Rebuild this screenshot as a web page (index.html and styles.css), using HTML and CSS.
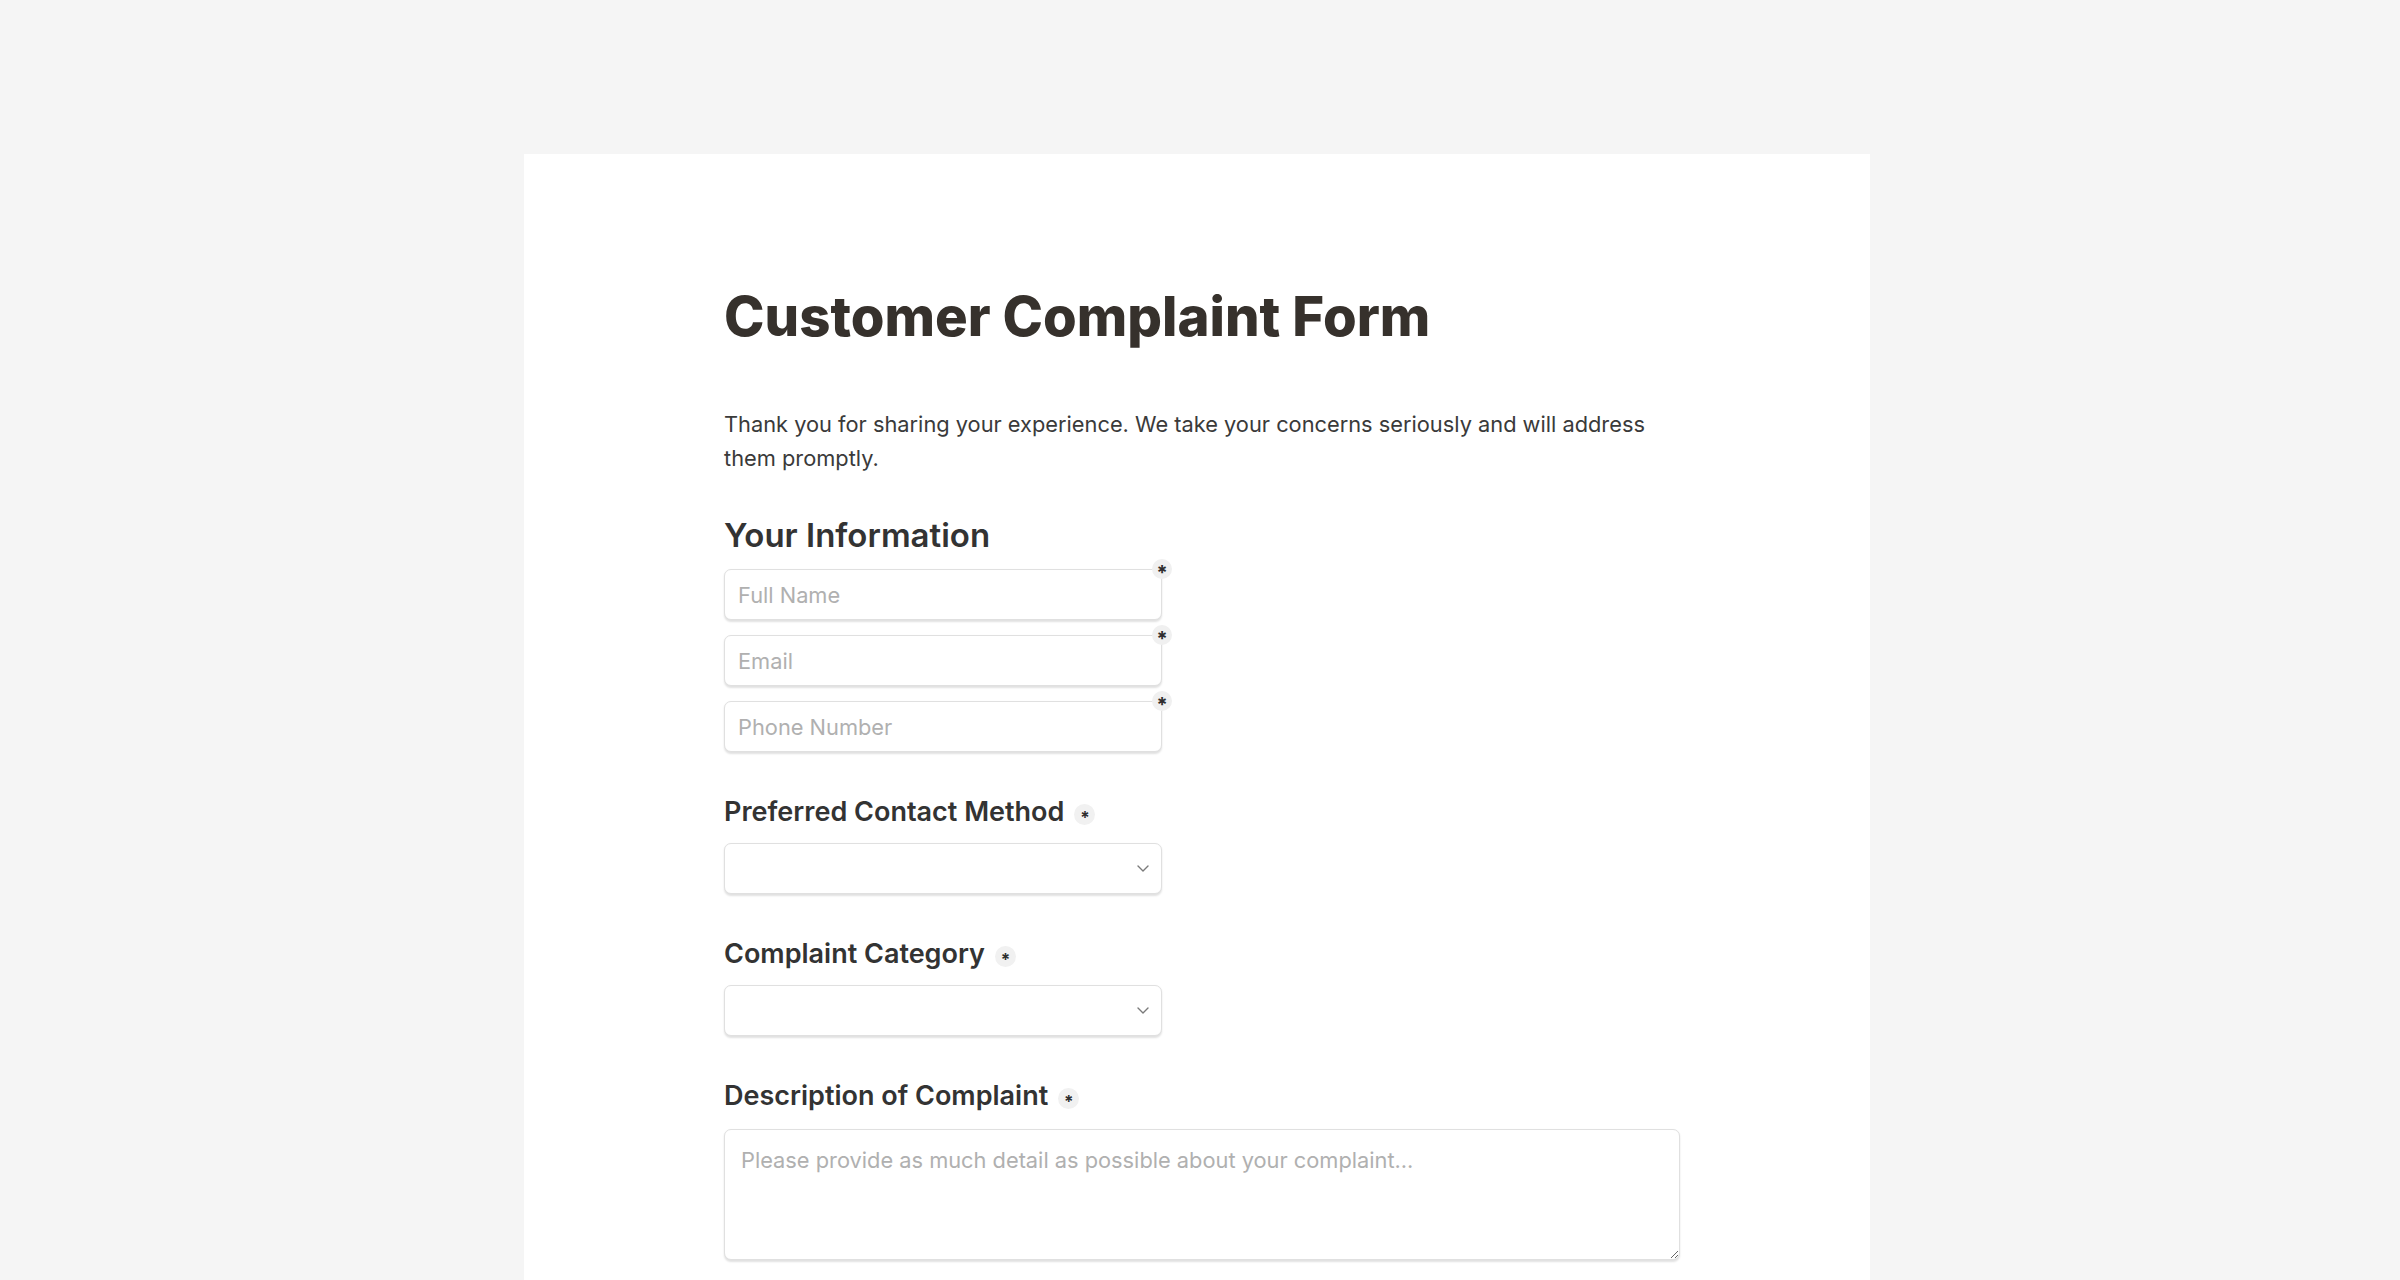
FILE: index.html
```html
<!DOCTYPE html>
<html lang="en">
<head>
<meta charset="utf-8">
<title>Customer Complaint Form</title>
<link rel="stylesheet" href="styles.css">
</head>
<body>
<main class="card">
  <div class="content">
    <h1 class="title">Customer Complaint Form</h1>
    <p class="intro">Thank you for sharing your experience. We take your concerns seriously and will address them promptly.</p>

    <section class="section">
      <h2 class="section-title">Your Information</h2>
      <div class="field-stack">
        <div class="input-wrap">
          <input class="input" type="text" placeholder="Full Name">
          <span class="req-badge">*</span>
        </div>
        <div class="input-wrap">
          <input class="input" type="email" placeholder="Email">
          <span class="req-badge">*</span>
        </div>
        <div class="input-wrap">
          <input class="input" type="tel" placeholder="Phone Number">
          <span class="req-badge">*</span>
        </div>
      </div>
    </section>

    <section class="group group-first">
      <label class="label">Preferred Contact Method <span class="req-dot">*</span></label>
      <div class="select-wrap">
        <select class="select"><option></option></select>
        <svg class="chevron" viewBox="0 0 12 7" width="12" height="7"><path d="M1 1l5 5 5-5" fill="none" stroke="#7a7a7a" stroke-width="1.4" stroke-linecap="round" stroke-linejoin="round"/></svg>
      </div>
    </section>

    <section class="group">
      <label class="label">Complaint Category <span class="req-dot">*</span></label>
      <div class="select-wrap">
        <select class="select"><option></option></select>
        <svg class="chevron" viewBox="0 0 12 7" width="12" height="7"><path d="M1 1l5 5 5-5" fill="none" stroke="#7a7a7a" stroke-width="1.4" stroke-linecap="round" stroke-linejoin="round"/></svg>
      </div>
    </section>

    <section class="group">
      <label class="label">Description of Complaint <span class="req-dot">*</span></label>
      <textarea class="textarea" placeholder="Please provide as much detail as possible about your complaint..."></textarea>
    </section>

    <div class="spacer"></div>
  </div>
</main>
</body>
</html>
```

FILE: styles.css
```css
html, body {
  margin: 0;
  padding: 0;
}

body {
  background: #f5f5f5;
  font-family: Inter, "Noto Sans", "Liberation Sans", sans-serif;
  color: #333;
  padding-top: 154px;
}

.card {
  display: block;
  width: 1346px;
  margin: 0 0 0 524px;
  background: #ffffff;
  padding: 130px 0 0 200px;
  box-sizing: border-box;
}

.content {
  width: 956px;
  display: flex;
  flex-direction: column;
}

.title {
  margin: 0;
  font-size: 54.5px;
  line-height: 65px;
  font-weight: 800;
  color: #36312c;
}

.intro {
  margin: 59px 0 0;
  font-size: 21.8px;
  line-height: 33.5px;
  color: #3a3a3a;
  max-width: 940px;
}

.section {
  margin-top: 40px;
}

.section-title {
  margin: 0;
  font-size: 33px;
  line-height: 41px;
  font-weight: 600;
  color: #333;
}

.field-stack {
  margin-top: 13px;
  display: flex;
  flex-direction: column;
  gap: 15px;
  width: 438px;
}

.input-wrap {
  position: relative;
}

.input,
.select,
.textarea {
  display: block;
  box-sizing: border-box;
  width: 100%;
  border: 1.5px solid #e0e0e0;
  border-radius: 7px;
  background: #fff;
  box-shadow: 0 1.5px 2px rgba(0, 0, 0, 0.12);
  font-family: Inter, "Noto Sans", "Liberation Sans", sans-serif;
  font-size: 21.8px;
  color: #333;
  outline: none;
}

.input {
  height: 51px;
  padding: 0 13px;
}

.input::placeholder,
.textarea::placeholder {
  color: #b0b0b0;
}

.req-badge {
  position: absolute;
  top: -10px;
  right: -10px;
  width: 20px;
  height: 20px;
  border-radius: 50%;
  background: #f0f0f0;
  color: #2e2e2e;
  font-size: 20px;
  font-weight: 700;
  line-height: 28px;
  text-align: center;
}

.group {
  margin-top: 40px;
  display: flex;
  flex-direction: column;
}

.group-first {
  margin-top: 40px;
}

.label {
  display: flex;
  align-items: center;
  gap: 10px;
  font-size: 27px;
  line-height: 40px;
  font-weight: 600;
  color: #333;
}

.req-dot {
  display: inline-block;
  width: 21px;
  height: 21px;
  border-radius: 50%;
  background: #f1f1f1;
  color: #2e2e2e;
  font-size: 17px;
  font-weight: 700;
  line-height: 28px;
  text-align: center;
  margin-top: 4px;
}

.select-wrap {
  position: relative;
  margin-top: 11px;
  width: 438px;
}

.select {
  height: 51px;
  appearance: none;
  -webkit-appearance: none;
  padding: 0 40px 0 14px;
}

.chevron {
  position: absolute;
  right: 13px;
  top: 22px;
}

.textarea {
  margin-top: 13px;
  height: 131px;
  padding: 14px 16px;
  resize: vertical;
  line-height: 1.5;
}

.spacer {
  height: 120px;
}
```
